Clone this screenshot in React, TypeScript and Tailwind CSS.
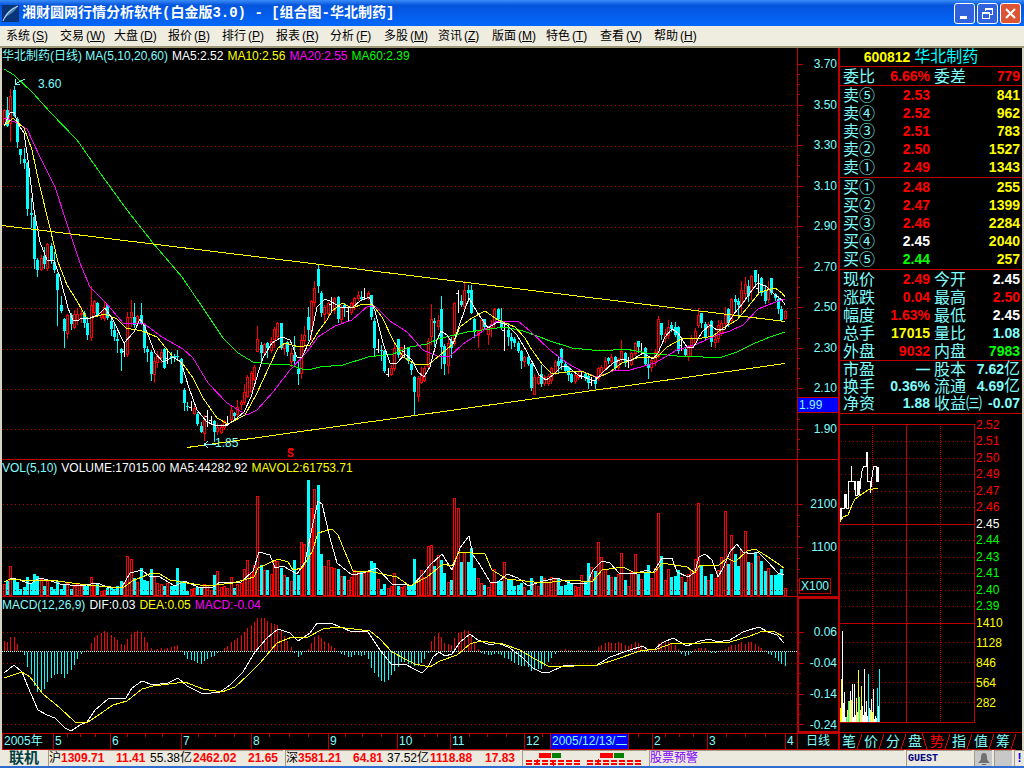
import type { ReactNode } from "react";
import clsx from "clsx";

// One entry per trading day: kind (r = rise, f = fall, w = flat) then high, body top, body bottom, low
const CANDLES = `
r109,110,125,126 f97,110,126,127 r89,96,124,142 f86,90,116,117 f117,119,142,148 f149,149,155,164 f148,159,163,169 f162,163,209,216 f198,213,215,228 f212,217,259,269
f258,260,270,277 r255,258,270,271 f247,256,264,269 r243,244,269,271 f243,246,260,264 f252,262,270,273 f273,274,290,326 f296,305,311,313 f318,319,331,348 r314,315,334,339
f313,315,324,330 r310,314,328,329 r308,314,321,325 r307,313,315,323 f311,313,323,328 f317,323,335,340 r286,305,338,341 r300,301,313,317 f302,303,315,317 r312,315,318,320
r301,307,319,321 f304,305,318,320 f319,321,329,336 f322,330,337,341 f333,339,341,353 f348,349,353,371 w342,351,352,357 r312,317,355,357 r300,312,318,327 f303,317,325,328
r315,316,324,326 f303,315,324,325 f323,325,348,353 f346,349,352,362 f350,352,374,381 r357,361,375,383 r351,355,363,368 r349,352,358,363 f348,349,368,369 w349,358,359,364
f352,356,358,364 f354,356,358,362 f350,356,357,361 f358,359,383,384 f388,390,403,411 f402,406,407,411 w401,407,408,411 r406,408,414,415 f412,414,424,426 f422,426,432,433
r415,420,434,441 w410,416,417,427 w416,420,421,425 f420,421,432,442 r423,427,432,435 r424,427,433,434 r420,421,428,430 w416,424,425,426 r406,410,420,421 f412,413,416,420
r400,407,415,418 r400,402,405,410 r384,392,403,405 r375,377,397,398 r371,373,392,393 r365,367,380,381 r326,339,352,352 f342,345,353,362 r343,344,353,356 f342,343,348,358
r337,341,351,353 r327,329,340,348 r322,323,337,340 f323,323,348,350 r343,343,349,355 f341,342,352,356 r348,353,362,367 f336,355,361,366 f361,369,374,385 r334,340,374,379
r326,335,341,347 f307,317,330,341 r300,301,332,341 r281,288,303,307 f264,269,286,293 f291,293,313,317 r305,307,315,322 r302,303,314,316 w297,304,305,312 r297,298,311,314
f296,297,319,323 r305,307,320,324 f303,305,308,317 w307,311,312,322 r302,303,313,315 r297,298,307,310 r291,295,299,301 f291,297,299,301 w288,297,298,300 r291,293,299,300
f295,295,317,320 f318,321,348,356 w339,349,350,353 f345,350,351,361 f350,351,371,373 w368,374,375,377 r365,368,375,376 r344,348,369,371 f339,339,355,358 r347,347,357,358
w345,351,352,357 f347,348,361,364 f361,364,370,375 f376,377,392,415 r376,378,397,402 r367,375,383,384 r366,368,381,382 r338,341,367,369 r304,319,337,345 f318,321,323,347
r315,320,327,330 f296,309,347,369 f344,346,364,375 r337,343,366,374 f337,341,348,358 r302,303,344,346 w290,293,294,313 f295,301,305,307 r281,290,307,310 f285,290,293,302
f285,290,313,314 f318,319,332,338 r330,331,336,348 r318,320,330,331 f319,319,327,330 r327,327,335,345 r320,324,328,337 r308,309,324,328 f308,309,319,322 f308,321,328,330
w323,330,331,351 f323,330,337,346 f333,337,341,349 f337,339,343,347 f341,343,351,353 f350,351,361,369 r356,357,362,367 f356,357,364,366 f363,364,388,391 r374,377,395,395
r375,377,384,385 f365,374,384,387 r375,377,384,386 r374,376,384,386 r367,368,381,384 r360,362,373,375 f357,361,366,373 f348,349,363,370 f361,364,371,373 f366,367,375,381
f373,374,382,383 r374,375,382,384 r372,375,378,380 w372,376,377,379 f372,374,378,381 f375,376,383,389 w377,382,383,386 f378,380,384,389 r367,368,379,381 r365,367,373,375
r357,361,369,371 f357,358,361,364 r354,357,362,366 f356,357,368,370 r358,359,368,371 r340,351,360,364 f352,353,363,367 w357,361,362,368 r352,353,365,366 r342,343,354,356
f341,341,347,353 w343,351,352,355 f347,348,364,366 f358,364,368,379 r359,360,368,372 r350,352,362,366 r316,319,357,358 f323,323,335,340 r329,333,339,343 r320,327,336,339
f322,325,329,332 f322,327,335,337 f326,327,351,354 w337,345,346,351 f347,349,355,357 r345,347,357,361 r335,338,347,356 r328,331,343,345 r308,315,326,328 f313,313,323,328
f322,324,337,341 r322,324,328,337 f320,321,342,347 r335,339,343,348 r320,325,339,343 r320,323,334,336 r307,315,324,330 f308,309,323,327 r298,299,321,324 f295,299,302,313
f298,301,305,317 r281,290,305,313 r277,284,294,301 f280,286,296,302 r275,276,291,300 f270,270,282,287 w274,288,289,293 f277,278,293,296 f285,290,301,304 r281,288,300,303
f278,278,293,295 f293,294,298,301 f296,299,309,314 f306,309,320,321 r310,311,319,320`
  .trim()
  .split(/\s+/)
  .map((c) => {
    const [high, top, bottom, low] = c.slice(1).split(",").map(Number);
    return { kind: c[0], high, top, bottom, low };
  });

const VOLUMES = [
  11, 14, 29, 17, 13, 6, 8, 18, 12, 21, 19, 16, 9, 14, 8, 6, 14, 6, 11, 12, 6, 9, 11, 9, 11, 9, 18, 10, 11, 4, 5, 7, 8, 6, 9, 14, 13, 39, 36, 17,
  13, 27, 15, 14, 26, 18, 12, 11, 9, 12, 9, 9, 27, 14, 12, 4, 6, 7, 8, 7, 11, 10, 5, 20, 24, 8, 9, 7, 18, 7, 11, 12, 26, 35, 23, 30, 99, 30, 25, 25,
  21, 34, 34, 27, 20, 18, 14, 35, 20, 53, 51, 115, 87, 106, 110, 41, 29, 35, 28, 27, 26, 19, 19, 15, 18, 25, 23, 24, 22, 23, 34, 32, 16, 6, 11, 7, 9, 22, 9, 8,
  9, 10, 9, 36, 17, 25, 18, 49, 50, 29, 40, 35, 22, 13, 15, 97, 87, 33, 43, 33, 47, 27, 17, 12, 10, 8, 12, 26, 14, 14, 33, 15, 15, 9, 10, 12, 8, 5, 17, 12,
  9, 19, 17, 13, 18, 16, 17, 9, 10, 15, 12, 9, 8, 20, 13, 32, 28, 24, 53, 38, 26, 20, 18, 18, 21, 42, 15, 9, 23, 41, 21, 16, 22, 30, 17, 27, 82, 39, 15, 26,
  18, 19, 25, 18, 13, 21, 25, 36, 92, 29, 19, 15, 21, 17, 25, 38, 84, 31, 60, 41, 29, 45, 64, 33, 32, 43, 39, 34, 24, 27, 20, 20, 21, 26, 7,
];

const MACD_BARS = [
  10, 9, 14, 14, 7, 1, -3, -15, -22, -34, -40, -40, -37, -30, -26, -23, -22, -22, -26, -22, -18, -13, -7, -2, 0, 1, 8, 14, 16, 18, 20, 18, 16, 14, 11, 7, 6, 12, 17, 19,
  20, 19, 14, 9, 3, 1, 2, 3, 2, 3, 4, 5, 6, 1, -3, -7, -8, -9, -11, -12, -9, -7, -5, -4, -1, 0, 3, 5, 9, 11, 13, 16, 19, 23, 26, 29, 33, 33, 33, 30,
  28, 27, 26, 20, 15, 10, 4, -1, -5, -3, 0, 2, 8, 14, 16, 13, 10, 8, 5, 3, 0, -2, -3, -5, -5, -3, -3, -4, -3, -7, -16, -21, -25, -29, -30, -28, -23, -19, -15, -10,
  -10, -12, -12, -14, -14, -11, -7, -1, 10, 15, 18, 14, 8, 7, 6, 13, 18, 19, 21, 20, 15, 9, 2, -1, -2, -3, -3, -2, -2, -3, -6, -7, -9, -11, -13, -14, -14, -15, -19, -18,
  -17, -17, -14, -10, -6, -2, 0, 1, 2, 1, 1, 0, 1, 1, 1, 0, 0, 1, 4, 6, 8, 9, 8, 8, 9, 8, 6, 5, 7, 9, 8, 6, 4, 1, 1, 1, 8, 9, 9, 9,
  8, 6, 2, -2, -4, -3, -1, 2, 3, 3, 3, 1, -1, -1, 0, 1, 2, 4, 6, 6, 7, 9, 7, 9, 9, 7, 5, 3, 1, -2, -3, -6, -9, -12, -14,
];

const MA5 =
  "4,126 10,113 14,112 18,124 24,133 28,160 34,210 40,242 47,260 54,261 60,277 68,308 73,320 77,321 82,318 87,319 98,315 105,308 113,320 124,343 134,332 140,319 145,327 155,353 163,362 173,357 181,362 189,388 197,410 207,422 217,426 227,425 237,418 244,412 251,397 259,370 263,358 269,348 272,343 282,337 290,340 297,357 302,357 310,340 317,307 325,299 332,302 340,307 352,308 360,301 369,297 375,311 383,343 390,363 397,363 405,354 412,360 418,372 424,377 430,367 437,340 441,331 447,335 453,344 460,323 469,298 477,312 488,328 498,322 507,325 517,335 527,352 539,375 546,380 553,375 562,366 568,367 578,375 595,381 602,373 613,363 622,359 630,361 643,353 653,359 658,353 665,337 672,329 678,333 687,347 693,348 702,332 710,325 717,330 725,329 733,315 743,303 752,290 758,283 767,287 775,295 782,300 785,305";
const MA10 =
  "4,126 13,118 24,128 32,150 39,183 50,228 58,262 67,285 77,301 87,319 105,314 117,319 126,328 142,331 157,337 173,357 183,364 193,378 203,398 217,418 228,424 245,415 257,393 269,367 278,348 285,343 299,347 310,345 318,332 327,320 332,311 342,303 352,308 363,304 372,304 382,317 393,340 403,357 415,364 428,365 440,355 453,344 460,327 472,318 485,311 498,320 515,327 525,338 530,347 542,364 552,374 567,372 582,371 597,378 610,372 622,363 640,357 657,357 667,347 683,338 697,339 713,336 723,328 737,320 747,308 760,292 775,288 782,293 785,297";
const MA20 =
  "4,118 15,122 27,129 40,157 55,187 68,227 80,263 90,287 105,302 124,324 143,323 162,337 183,349 193,358 208,383 227,403 247,415 257,410 273,392 290,370 307,352 318,337 335,326 352,320 368,306 375,306 390,321 407,332 423,350 437,356 450,356 463,344 480,333 497,321 518,321 530,331 550,350 567,363 583,372 597,377 613,371 630,370 655,363 677,350 697,344 717,335 730,331 743,325 758,309 773,303 785,299";
const MA60 =
  "4,69 14,75 33,93 50,112 77,140 103,177 127,210 153,243 182,277 203,308 223,338 238,353 253,362 269,364 290,365 302,369 312,369 320,367 343,365 368,357 393,354 410,347 427,344 438,339 467,332 505,327 523,331 540,337 550,341 572,348 602,351 625,349 647,353 677,356 703,357 722,357 737,352 753,344 770,337 785,332";
const VOL_MA5 =
  "4,582 12,578 20,580 30,584 40,578 48,580 60,584 80,586 97,583 110,588 122,587 130,573 142,570 150,577 158,576 175,586 185,581 200,588 213,587 220,582 240,583 253,571 259,552 270,555 275,568 283,566 297,574 305,562 312,528 318,501 322,504 330,538 337,563 352,575 363,573 377,568 392,584 402,584 412,586 423,574 430,565 442,554 452,570 460,548 469,536 473,555 480,565 490,582 498,582 507,574 518,578 528,586 543,581 557,578 570,583 587,583 593,570 602,561 610,563 620,574 637,573 647,570 653,573 662,558 672,558 677,572 688,577 695,572 699,557 705,554 712,560 718,577 723,568 730,552 737,544 743,552 752,554 758,552 768,562 778,573 784,575";
const VOL_MA10 =
  "4,582 10,579 32,581 50,580 87,585 123,588 132,581 152,573 158,573 170,580 187,583 207,586 233,583 254,577 258,568 278,559 288,562 293,570 302,568 312,552 318,533 332,529 338,535 345,552 353,571 373,572 397,577 410,586 427,577 443,564 452,566 459,552 485,554 492,570 507,579 543,583 570,580 592,582 602,570 623,567 633,572 655,572 662,563 687,567 695,573 700,565 718,566 727,558 735,562 747,551 755,549 765,555 777,563 784,568";
const DIF =
  "4,673 14,665 22,672 28,687 38,710 47,715 55,718 65,728 71,731 80,725 87,722 95,710 108,699 126,698 132,688 142,681 153,685 168,683 178,678 187,686 203,694 220,692 230,685 243,672 255,652 267,638 278,629 290,633 298,641 310,633 317,623 333,624 350,631 368,632 380,650 392,665 405,664 414,669 422,673 428,667 433,657 439,652 445,656 452,654 460,642 470,634 478,640 490,645 498,643 510,648 523,658 533,668 543,673 550,672 563,666 587,665 597,665 610,657 627,651 643,646 648,650 655,649 662,643 673,638 687,646 700,641 710,639 717,642 730,640 743,632 759,627 768,632 777,635 784,643";
const DEA =
  "4,678 22,672 30,677 43,694 60,708 75,722 88,722 100,714 113,705 127,701 142,689 153,686 185,682 203,689 222,692 235,687 248,675 260,663 277,643 292,637 308,637 323,629 337,627 370,631 380,639 392,652 405,659 415,664 430,667 440,661 457,655 470,644 480,641 503,644 520,650 533,658 550,667 598,665 617,659 640,651 657,649 673,643 693,644 710,642 730,642 750,636 763,631 775,632 784,637";

const PRICE_GRID = [105, 146, 186, 227, 267, 308, 349, 389, 429];
const PRICE_LABELS = ["3.70", "3.50", "3.30", "3.10", "2.90", "2.70", "2.50", "2.30", "2.10", "1.90"];

const barX = (i: number) => Math.floor(4.3 + i * 3.3376);

const MENU: [string, string][] = [
  ["系统", "S"], ["交易", "W"], ["大盘", "D"], ["报价", "B"], ["排行", "P"], ["报表", "R"], ["分析", "F"],
  ["多股", "M"], ["资讯", "Z"], ["版面", "M"], ["特色", "T"], ["查看", "V"], ["帮助", "H"],
];

const MONTHS = ["2005年", "5", "6", "7", "8", "9", "10", "11", "12", "2", "3", "4"];

const RED = "text-[#ff0000]";
const YELLOW = "text-[#ffff00]";
const WHITE = "text-white";
const GREEN = "text-[#00ff00]";
const CYAN = "text-[#80ffff]";

const ASKS: [string, string, string][] = [
  ["卖⑤", "2.53", "841"], ["卖④", "2.52", "962"], ["卖③", "2.51", "783"], ["卖②", "2.50", "1527"], ["卖①", "2.49", "1343"],
];
const BIDS: [string, string, string][] = [
  ["买①", "2.48", "255"], ["买②", "2.47", "1399"], ["买③", "2.46", "2284"], ["买④", "2.45", "2040"], ["买⑤", "2.44", "257"],
];

type Pair = [string, string, string, string, string, string];
const QUOTES: Pair[] = [
  ["现价", "2.49", RED, "今开", "2.45", WHITE],
  ["涨跌", "0.04", RED, "最高", "2.50", RED],
  ["幅度", "1.63%", RED, "最低", "2.45", WHITE],
  ["总手", "17015", YELLOW, "量比", "1.08", CYAN],
  ["外盘", "9032", RED, "内盘", "7983", GREEN],
];
const FUNDAMENTALS: Pair[] = [
  ["市盈", "—", CYAN, "股本", "7.62亿", CYAN],
  ["换手", "0.36%", CYAN, "流通", "4.69亿", CYAN],
  ["净资", "1.88", CYAN, "收益㈢", "-0.07", CYAN],
];

const TICK_PRICES: [string, string][] = [
  ["2.52", RED], ["2.51", RED], ["2.50", RED], ["2.49", RED], ["2.47", RED], ["2.46", RED],
  ["2.45", WHITE], ["2.44", GREEN], ["2.43", GREEN], ["2.41", GREEN], ["2.40", GREEN], ["2.39", GREEN],
];

const TICK_VOLUMES =
  "w20 y14 y43 w91 w19 w30 w5 c5 y12 c21 y21 w31 y22 w38 w5 w38 w7 y24 w10 y52 c25 w12 y36 w16 w7 w53 w10 w21 w6 c48 w14 y12 w23 y10 w33 w3 w6 w4 c34 w16 c53".split(" ");
const TICK_FILL: Record<string, string> = { w: "#fff", y: "#ff0", c: "#0ff" };

function Plot({ box, children }: { box: string; children: ReactNode }) {
  return (
    <svg className="absolute inset-0 h-full w-full" viewBox={box} preserveAspectRatio="none" shapeRendering="crispEdges" fill="none" aria-hidden>
      {children}
    </svg>
  );
}

function Grid({ ys, x1, x2 }: { ys: number[]; x1: number; x2: number }) {
  return (
    <>
      {ys.map((y) => (
        <path key={y} d={`M${x1} ${y + 0.5}H${x2}`} stroke="#c00000" strokeDasharray="1 3" />
      ))}
    </>
  );
}

function Candle({ i }: { i: number }) {
  const { kind, high, top, bottom, low } = CANDLES[i];
  const x = barX(i);
  if (kind === "r") {
    return (
      <>
        <rect x={x} y={high} width={1} height={top - high} fill="#f00" />
        <rect x={x - 0.5} y={top + 0.5} width={2} height={Math.max(bottom - top - 1, 1)} fill="#000" stroke="#f00" />
        <rect x={x} y={bottom} width={1} height={low - bottom} fill="#f00" />
      </>
    );
  }
  const color = kind === "f" ? "#0ff" : "#fff";
  return (
    <>
      <rect x={x} y={high} width={1} height={low - high} fill={color} />
      <rect x={kind === "f" ? x - 1 : x - 2} y={top} width={3} height={bottom - top} fill={color} />
    </>
  );
}

function Ticks({ box, from, to, step, major }: { box: string; from: number; to: number; step: number; major: number }) {
  const count = Math.floor((to - from) / step);
  return (
    <div className="relative w-2 shrink-0">
      <Plot box={box}>
        {Array.from({ length: count + 1 }, (_, i) => (
          <path key={i} d={`M0 ${Math.round(from + i * step) + 0.5}h${i % major === 0 ? 5 : 2}`} stroke="#c00000" />
        ))}
      </Plot>
    </div>
  );
}

function Legend({ items }: { items: [string, string][] }) {
  return (
    <div className="absolute left-0 top-0 flex gap-1 whitespace-nowrap text-xs leading-4">
      {items.map(([text, color]) => (
        <span key={text} className={color}>{text}</span>
      ))}
    </div>
  );
}

function PricePanel() {
  return (
    <section className="flex min-h-[412px] flex-1 border-b border-[#c00000]">
      <div className="relative min-w-0 flex-1">
        <Plot box="2 48 795 411">
          <Grid ys={PRICE_GRID} x1={3} x2={797} />
          {CANDLES.map((_, i) => <Candle key={i} i={i} />)}
          <polyline points={MA60} stroke="#0f0" />
          <polyline points={MA20} stroke="#f0f" />
          <polyline points={MA10} stroke="#ff0" />
          <polyline points={MA5} stroke="#fff" />
          <path d="M2 225.5L785 321.5M187 447.5L785 363.5" stroke="#ff0" />
          <path d="M15 84l10-5M15 84l1-5M15 84l5 0M204 444.5h12M204 444.5l4-3M204 444.5l4 3" stroke="#80ffff" />
          <path d="M288 450l3-2 3 2" stroke="#f00" />
        </Plot>
        <Legend
          items={[
            ["华北制药(日线) MA(5,10,20,60)", CYAN],
            ["MA5:2.52", WHITE],
            ["MA10:2.56", YELLOW],
            ["MA20:2.55", "text-[#ff00ff]"],
            ["MA60:2.39", GREEN],
          ]}
        />
        <span className="absolute left-9 top-7 text-xs leading-4 text-[#80ffff]">3.60</span>
        <span className="absolute bottom-2 left-[213px] text-xs leading-4 text-[#80ffff]">1.85</span>
        <span className="absolute bottom-0 left-[285px] text-[10px] font-bold leading-[10px] text-[#ff0000]">S</span>
      </div>
      <div className="relative flex w-[41px] shrink-0 border-l border-[#c00000]">
        <Ticks box="0 48 8 411" from={64} to={459} step={10.14} major={4} />
        <div className="flex flex-1 flex-col justify-between pb-[22px] pr-px pt-2 text-right text-xs leading-4 text-[#80ffff]">
          {PRICE_LABELS.map((p) => <span key={p}>{p}</span>)}
        </div>
        <span className="absolute bottom-[46px] left-0 w-full border-y border-[#c00000] bg-[#0000ff] pl-px text-xs leading-[14px] text-[#80ffff]">1.99</span>
      </div>
    </section>
  );
}

function VolumePanel() {
  return (
    <section className="flex h-[137px] border-b border-[#c00000]">
      <div className="relative min-w-0 flex-1">
        <Plot box="2 460 795 136">
          <Grid ys={[504, 547]} x1={3} x2={797} />
          {VOLUMES.map((h, i) =>
            CANDLES[i].kind === "f" ? (
              <rect key={i} x={barX(i) - 1} y={595 - h} width={3} height={h} fill="#0ff" />
            ) : (
              <rect key={i} x={barX(i) - 0.5} y={595.5 - h} width={2} height={h} stroke="#f00" />
            ),
          )}
          <Grid ys={[590]} x1={3} x2={797} />
          <polyline points={VOL_MA5} stroke="#fff" />
          <polyline points={VOL_MA10} stroke="#ff0" />
        </Plot>
        <Legend
          items={[
            ["VOL(5,10)", CYAN],
            ["VOLUME:17015.00", WHITE],
            ["MA5:44282.92", WHITE],
            ["MAVOL2:61753.71", YELLOW],
          ]}
        />
      </div>
      <div className="relative flex w-[41px] shrink-0 border-l border-[#c00000]">
        <Ticks box="0 460 8 136" from={504} to={595} step={10.8} major={4} />
        <div className="flex flex-1 flex-col gap-[27px] pr-px pt-9 text-right text-xs leading-4 text-[#80ffff]">
          <span>2100</span>
          <span>1100</span>
        </div>
        <span className="absolute bottom-0.5 left-px border border-[#c00000] px-px text-xs leading-[14px] text-[#80ffff]">X100</span>
      </div>
    </section>
  );
}

function MacdPanel() {
  return (
    <section className="flex h-[136px]">
      <div className="relative min-w-0 flex-1">
        <Plot box="2 597 795 136">
          <Grid ys={[632, 663, 693, 724]} x1={3} x2={797} />
          {MACD_BARS.map((h, i) =>
            h === 0 ? null : (
              <rect key={i} x={barX(i)} y={h > 0 ? 651 - h : 652} width={1} height={Math.abs(h)} fill={h > 0 ? "#f00" : "#0ff"} />
            ),
          )}
          <path d="M2 651.5H797" stroke="#c0ffff" strokeDasharray="1 1" />
          <polyline points={DIF} stroke="#fff" />
          <polyline points={DEA} stroke="#ff0" />
        </Plot>
        <Legend
          items={[
            ["MACD(12,26,9)", CYAN],
            ["DIF:0.03", WHITE],
            ["DEA:0.05", YELLOW],
            ["MACD:-0.04", "text-[#ff00ff]"],
          ]}
        />
      </div>
      <div className="flex w-[41px] shrink-0 border-2 border-r-0 border-[#c00000]">
        <Ticks box="0 599 8 132" from={632} to={729} step={10.25} major={3} />
        <div className="flex flex-1 flex-col justify-between pr-px pt-[27px] text-right text-xs leading-3 text-[#80ffff]">
          {["0.06", "-0.04", "-0.14", "-0.24"].map((p) => <span key={p}>{p}</span>)}
        </div>
      </div>
    </section>
  );
}

function DateAxis() {
  return (
    <div className="flex h-[17px] border-b border-t border-[#c00000] text-xs leading-[15px] text-[#80ffff]">
      <div className="relative grid min-w-0 flex-1 grid-cols-[51fr_57fr_71fr_70fr_77fr_69fr_53fr_74fr_128fr_55fr_78fr_12fr]">
        {MONTHS.map((m) => (
          <span key={m} className="relative min-w-0 whitespace-nowrap border-l border-[#c00000] pl-px">
            {m}
            {m === "12" && (
              <span className="absolute left-[25px] top-0 h-[15px] border-x border-[#c00000] bg-[#0000ff] px-px leading-[14px]">2005/12/13/二</span>
            )}
          </span>
        ))}
        <svg className="absolute inset-x-0 top-0 h-[3px] w-full" viewBox="2 0 795 3" preserveAspectRatio="none" shapeRendering="crispEdges" aria-hidden>
          <path d="M67.5 0v3M80.5 0v3M95.5 0v3M127.5 0v3M145.5 0v3M162.5 0v3M198.5 0v3M215.5 0v3M234.5 0v3M269.5 0v3M289.5 0v3M308.5 0v3M345.5 0v3M362.5 0v3M381.5 0v3M410.5 0v3M424.5 0v3M437.5 0v3M469.5 0v3M487.5 0v3M506.5 0v3M542.5 0v3M638.5 0v3M665.5 0v3M679.5 0v3M693.5 0v3M726.5 0v3M745.5 0v3M765.5 0v3" stroke="#c00000" />
        </svg>
      </div>
      <div className="w-[41px] shrink-0 border-l border-[#c00000] text-center">日线</div>
    </div>
  );
}

function BookTable({ rows }: { rows: [string, string, string][] }) {
  return (
    <div className="border-b border-[#c00000] pb-px">
      <table className="w-full table-fixed">
        <tbody>
          {rows.map(([label, price, volume]) => (
            <tr key={label} className="h-[18px]">
              <th scope="row" className="w-[35px] whitespace-nowrap pl-[3px] text-left text-base font-normal leading-[17px] text-[#80ffff]">{label}</th>
              <td className={clsx("w-[55px] text-right leading-[17px]", price === "2.45" ? WHITE : price === "2.44" ? GREEN : RED)}>{price}</td>
              <td className="pr-0.5 text-right leading-[17px] text-[#ffff00]">{volume}</td>
            </tr>
          ))}
        </tbody>
      </table>
    </div>
  );
}

function PairTable({ rows, tight }: { rows: Pair[]; tight?: boolean }) {
  return (
    <div className={clsx("border-b border-[#c00000]", tight && "pb-px")}>
      <table className="w-full table-fixed">
        <tbody>
          {rows.map(([l1, v1, c1, l2, v2, c2]) => (
            <tr key={l1} className={tight ? "h-[17px]" : "h-[18px]"}>
              <th scope="row" className="w-[35px] whitespace-nowrap pl-[3px] text-left text-base font-normal leading-[17px] text-[#80ffff]">{l1}</th>
              <td className={clsx("w-[55px] text-right leading-[17px]", c1)}>{v1}</td>
              <th scope="row" className="w-9 whitespace-nowrap pl-1 text-left text-base font-normal leading-[17px] text-[#80ffff]">{l2}</th>
              <td className={clsx("whitespace-nowrap pr-0.5 text-right leading-[17px]", c2)}>
                {v2.replace("亿", "")}
                {v2.endsWith("亿") && <span className="text-base font-normal leading-4">亿</span>}
              </td>
            </tr>
          ))}
        </tbody>
      </table>
    </div>
  );
}

function IntradayChart() {
  return (
    <div className="flex min-h-[316px] flex-1">
      <div className="relative min-w-0 flex-1">
        <Plot box="840 414 135 318">
          <Grid ys={[441, 458, 474, 491, 507, 540, 557, 573, 590, 606, 642, 662, 682, 702]} x1={841} x2={974} />
          <path d="M872.5 424V722M940.5 424V722" stroke="#c00000" strokeDasharray="1 1" />
          <path d="M840 424.5H974.5V722.5H840M840 524.5H974M840 623.5H974M906.5 424V722M840 722.5h135" stroke="#c00000" />
          {TICK_VOLUMES.map((v, i) => {
            const h = Number(v.slice(1));
            return <rect key={i} x={839 + i} y={722 - h} width={1} height={h} fill={TICK_FILL[v[0]]} />;
          })}
          <path d="M840.5 522V508H844.5V494H846.5V508H848.5V481H851.5V466V481H855.5V495H857.5V481H859.5V495L861.5 473L863.5 466H866.5V452H867.5V481H870.5V493L871.5 481L873.5 466H876.5V481H878.5V467" stroke="#fff" />
          <path d="M841.5 508V520M845.5 494V508M854.5 481V490M858.5 481V495M877.5 467V481" stroke="#fff" />
          <polyline points="840,522 843,517 848,515 852,505 855,499 862,494 868,490 873,489 878,488" stroke="#ff0" />
        </Plot>
      </div>
      <div className="flex w-[47px] shrink-0 flex-col gap-[3px] pb-[22px] pl-px pt-1 text-xs leading-[14px]">
        <div className="flex flex-[195] flex-col justify-between">
          {TICK_PRICES.map(([p, color]) => <span key={p} className={color}>{p}</span>)}
        </div>
        <div className="flex flex-[94] flex-col justify-between text-[#ffff00]">
          {["1410", "1128", "846", "564", "282"].map((v) => <span key={v}>{v}</span>)}
        </div>
      </div>
    </div>
  );
}

function PanelTabs() {
  return (
    <div className="flex h-[18px] border-t border-[#c00000]" role="tablist">
      {["笔", "价", "分", "盘", "势", "指", "值", "筹"].map((t) => (
        <button
          key={t}
          type="button"
          role="tab"
          aria-selected={t === "势"}
          className={clsx("flex w-[22px] items-center justify-end border-b border-[#c00000] text-sm leading-4", t === "势" ? RED : CYAN)}
        >
          {t}
          <svg className="h-4 w-1.5 shrink-0" viewBox="0 0 6 16" shapeRendering="crispEdges" aria-hidden>
            <path d={t === "盘" ? "M0 0L5 16" : "M6 1L1 16"} stroke="#e00000" fill="none" />
          </svg>
        </button>
      ))}
    </div>
  );
}

function QuotePanel() {
  return (
    <aside className="flex w-[184px] shrink-0 flex-col border-l-2 border-[#c00000] text-sm font-bold">
      <h2 className="h-[19px] border-b border-[#c00000] pr-5 text-center leading-[18px] text-[#ffff00]">
        600812 <span className="text-base font-normal leading-[18px] text-[#00ffff]">华北制药</span>
      </h2>
      <PairTable rows={[["委比", "6.66%", RED, "委差", "779", RED]]} />
      <BookTable rows={ASKS} />
      <BookTable rows={BIDS} />
      <PairTable rows={QUOTES} />
      <PairTable rows={FUNDAMENTALS} tight />
      <div className="flex flex-1 flex-col font-normal">
        <IntradayChart />
        <PanelTabs />
      </div>
    </aside>
  );
}

function TitleBar() {
  const box = "flex size-[21px] items-center justify-center rounded-[3px] border border-white";
  return (
    <header className="flex h-[26px] items-center bg-linear-to-b from-[#3a8cf8] via-[#0454dc] via-20% to-[#0468fc] pl-0.5 pr-[3px]">
      <svg className="size-[17px] shrink-0" viewBox="0 0 17 17" aria-hidden>
        <rect width="17" height="17" fill="#0a3478" />
        <path d="M1 16C3 8 8 3 16 1C14 5 9 9 4 12" fill="#4f86b8" />
        <path d="M1 16C4 9 9 4 16 1" stroke="#cfe6ff" fill="none" />
      </svg>
      <h1 className="ml-[3px] flex-1 truncate font-['Liberation_Mono','Noto_Sans_CJK_SC',monospace] text-sm font-bold text-white">
        湘财圆网行情分析软件(白金版3.0) - [组合图-华北制药]
      </h1>
      <div className="flex gap-0.5">
        <button type="button" aria-label="最小化" className={clsx(box, "bg-[#2f62dc]")}>
          <svg className="size-[17px]" viewBox="0 0 17 17"><path d="M4 11h7v3H4z" fill="#fff" /></svg>
        </button>
        <button type="button" aria-label="还原" className={clsx(box, "bg-[#2f62dc]")}>
          <svg className="size-[17px]" viewBox="0 0 17 17" fill="none" stroke="#fff" shapeRendering="crispEdges">
            <path d="M6.5 6V3.5h7v6H11M6 4.5h8M3.5 7.5h7v6h-7zM3 8.5h8" />
          </svg>
        </button>
        <button type="button" aria-label="关闭" className={clsx(box, "bg-[#dc5434]")}>
          <svg className="size-[17px]" viewBox="0 0 17 17"><path d="M4 4l9 9M13 4l-9 9" stroke="#fff" strokeWidth="2" /></svg>
        </button>
      </div>
    </header>
  );
}

function Breadth({ red, green, down }: { red: number; green: number; down?: boolean }) {
  return (
    <svg className="h-[15px] w-[61px] shrink-0" viewBox="0 0 61 15" shapeRendering="crispEdges" aria-hidden>
      <rect x="14" y="2" width={red} height="5" fill="#f00" />
      <rect x={15 + red} y="2" width={green} height="5" fill="#008000" />
      {[1, 9, 17, 25, 33, 41, 49].map((x) => (
        <path key={x} d={`M${x} 9h6v2h-6zM${x} 12h6v2h-6z`} fill="#f00" />
      ))}
      <path d="M11 14v-3h-2l3-3 3 3h-2v3z" fill="#f00" />
      {down && <path d="M27 9v3h-2l3 3 3-3h-2v-3z" fill="#f00" />}
    </svg>
  );
}

function StatusBar() {
  const cell = "flex h-4 items-center overflow-hidden whitespace-nowrap border-l border-t border-[#a09c88] leading-[15px]";
  return (
    <footer className="flex h-[18px] gap-0.5 border-b-2 border-[#2f6cd0] bg-[#ece9de] text-xs text-black">
      <span className="w-[46px] pl-[9px] text-[15px] font-bold leading-4 text-[#004040]">联机</span>
      <div className={clsx(cell, "w-[235px]")}>
        沪<b className="w-[55px] text-[#ff0000]">1309.71</b>
        <b className="w-[34px] text-[#ff0000]">11.41</b>
        <span className="w-[43px]">55.38亿</span>
        <b className="w-[55px] text-[#ff0000]">2462.02</b>
        <b className="text-[#ff0000]">21.65</b>
      </div>
      <div className={clsx(cell, "w-[235px]")}>
        深<b className="w-[55px] text-[#ff0000]">3581.21</b>
        <b className="w-[34px] text-[#ff0000]">64.81</b>
        <span className="w-[43px]">37.52亿</span>
        <b className="w-[55px] text-[#ff0000]">1118.88</b>
        <b className="text-[#ff0000]">17.83</b>
      </div>
      <div className={clsx(cell, "w-[125px] pl-0.5")}>
        <Breadth red={12} green={9} down />
        <Breadth red={13} green={10} />
      </div>
      <div className={clsx(cell, "flex-1 text-[#8000ff]")}>股票预警</div>
      <div className={clsx(cell, "w-[66px] pl-px font-['Liberation_Mono',monospace] text-[10px] font-bold text-[#000080]")}>GUEST</div>
      <div className={clsx(cell, "w-[18px] justify-center bg-[#c8c8c8]")}>
        <svg className="h-3.5 w-3.5" viewBox="0 0 14 14" aria-hidden>
          <path d="M7 1c3 0 3 3 3 5s1 3 3 5H1c2-2 3-3 3-5s0-5 3-5zM5 12h4v1H5z" fill="#707070" />
        </svg>
      </div>
      <div className={clsx(cell, "w-[18px] bg-[#c8c8c8]")} />
      <div className={clsx(cell, "w-2.5 justify-center font-bold text-[#0000ff]")}>!</div>
    </footer>
  );
}

export default function App() {
  return (
    <div className="flex min-h-screen flex-col bg-black font-['Liberation_Sans','Noto_Sans_CJK_SC',sans-serif]">
      <TitleBar />
      <nav className="flex h-[22px] border-b-2 border-[#9c9878] bg-[#efece0] pl-1.5">
        {MENU.map(([label, key]) => (
          <button key={label} type="button" className="w-[54px] whitespace-nowrap text-left text-xs leading-5 text-black">
            {label}
            <span className="ml-0.5">(<u>{key}</u>)</span>
          </button>
        ))}
      </nav>
      <main className="flex flex-1 border-x-2 border-[#d8d4c4]">
        <div className="flex min-w-0 flex-1 flex-col">
          <PricePanel />
          <VolumePanel />
          <MacdPanel />
          <DateAxis />
        </div>
        <QuotePanel />
      </main>
      <StatusBar />
    </div>
  );
}
